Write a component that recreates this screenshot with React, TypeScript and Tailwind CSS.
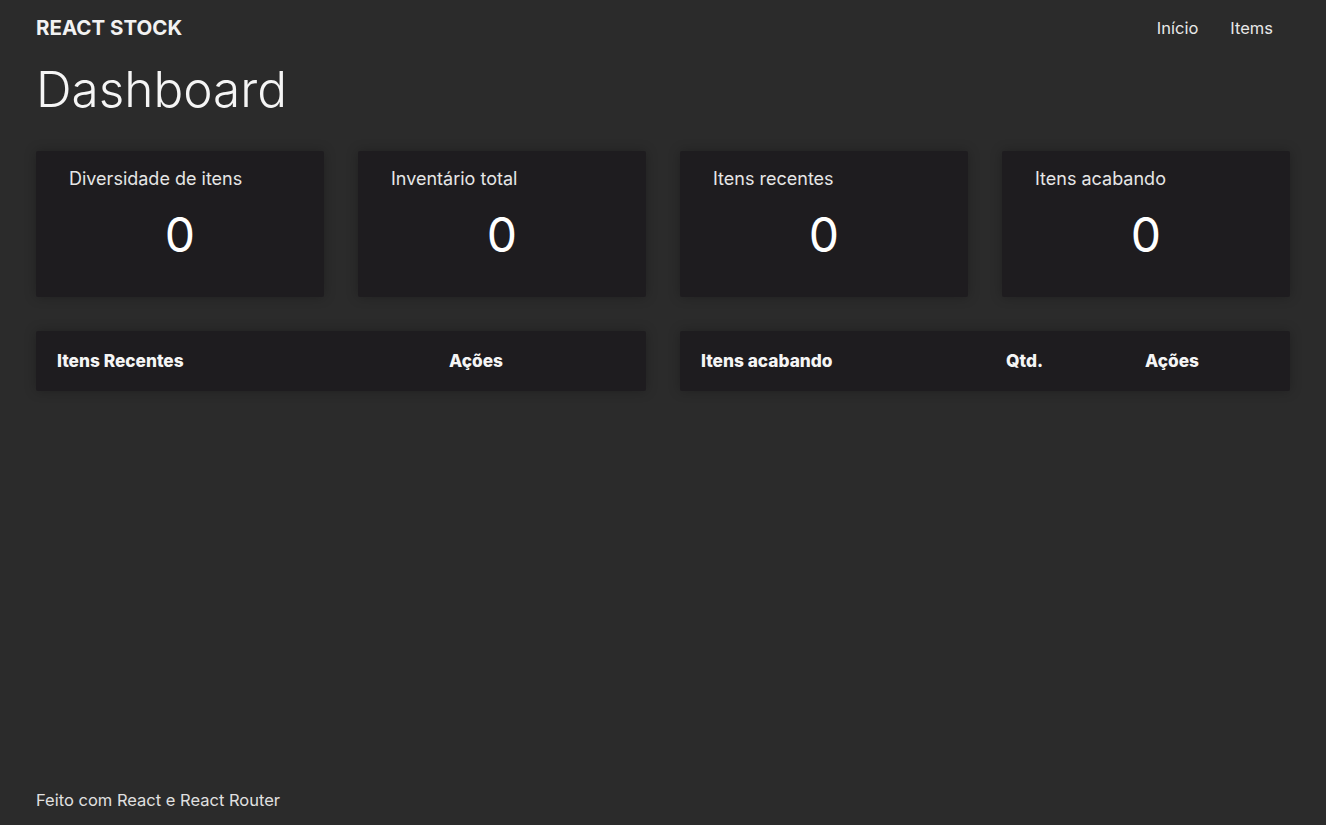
import React from "react";

const font = { fontFamily: "Inter, 'Noto Sans', sans-serif" };

function StatCard({ title }: { title: string }) {
  return (
    <div className="h-[146px] bg-[#1e1c1f] rounded-[2px] shadow-[0_0_12px_rgba(0,0,0,0.25)] pt-[16px] flex flex-col">
      <div className="pl-[33px] text-[18px] leading-[24px] text-[#e6e6e6]">{title}</div>
      <div className="mt-[20px] text-center text-[48px] leading-[48px] text-white font-normal">0</div>
    </div>
  );
}

export default function App() {
  return (
    <div style={font} className="h-screen w-full bg-[#2b2b2b] text-white flex flex-col px-9 overflow-hidden">
      <header className="flex items-center justify-between pt-[14px]">
        <div className="text-[20.5px] leading-[28px] font-bold text-[#f2f2f2]">REACT STOCK</div>
        <nav className="flex gap-[32px] mr-[17px] text-[16.5px] leading-[28px] text-[#e8e8e8]">
          <span>Início</span>
          <span>Items</span>
        </nav>
      </header>
      <h1 className="mt-[22px] text-[49.5px] leading-[50px] font-light text-[#f5f5f5]">Dashboard</h1>
      <div className="mt-[37px] grid grid-cols-4 gap-[34px]">
        <StatCard title="Diversidade de itens" />
        <StatCard title="Inventário total" />
        <StatCard title="Itens recentes" />
        <StatCard title="Itens acabando" />
      </div>
      <div className="mt-[34px] grid grid-cols-2 gap-[34px]">
        <div className="h-[60px] bg-[#1e1c1f] rounded-[2px] shadow-[0_0_12px_rgba(0,0,0,0.25)] flex items-center text-[17.3px] font-extrabold text-[#f5f5f5]">
          <div className="pl-[21px] w-[413px]">Itens Recentes</div>
          <div>Ações</div>
        </div>
        <div className="h-[60px] bg-[#1e1c1f] rounded-[2px] shadow-[0_0_12px_rgba(0,0,0,0.25)] flex items-center text-[17.3px] font-extrabold text-[#f5f5f5]">
          <div className="pl-[21px] w-[326px]">Itens acabando</div>
          <div className="w-[139px]">Qtd.</div>
          <div>Ações</div>
        </div>
      </div>
      <footer className="mt-auto pb-[14px] text-[16.5px] leading-[22px] text-[#e0e0e0]">
        Feito com React e React Router
      </footer>
    </div>
  );
}
